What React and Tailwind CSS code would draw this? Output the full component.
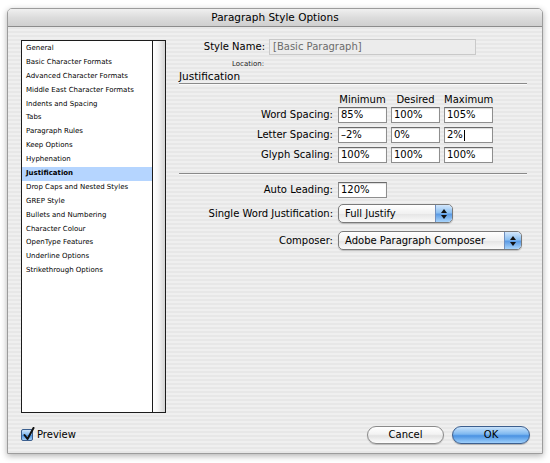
import React from "react";

const font = "font-['DejaVu_Sans',sans-serif]";

const sections = [
  "General",
  "Basic Character Formats",
  "Advanced Character Formats",
  "Middle East Character Formats",
  "Indents and Spacing",
  "Tabs",
  "Paragraph Rules",
  "Keep Options",
  "Hyphenation",
  "Justification",
  "Drop Caps and Nested Styles",
  "GREP Style",
  "Bullets and Numbering",
  "Character Colour",
  "OpenType Features",
  "Underline Options",
  "Strikethrough Options",
];

const spacingRows = [
  { label: "Word Spacing:", values: ["85%", "100%", "105%"] },
  { label: "Letter Spacing:", values: ["\u20132%", "0%", "2%"] },
  { label: "Glyph Scaling:", values: ["100%", "100%", "100%"] },
];

const Field = ({ value, caret = false, className = "w-[49px]" }) => (
  <div
    className={`${className} h-[16px] bg-white border border-[#8e8e8e] border-t-[#6a6a6a] shadow-[inset_0_1px_1px_rgba(0,0,0,0.15)] pl-[2px] flex items-center text-[10px] leading-none text-black`}
  >
    {value}
    {caret && <span className="w-px h-[11px] bg-black ml-px" />}
  </div>
);

const PopupArrows = () => (
  <div className="w-[17px] h-full rounded-r-[4px] border-l border-[#6f8fbf] bg-[linear-gradient(180deg,#d3e7fc_0%,#8cc0f2_45%,#5c9be4_55%,#a8d4fb_100%)] flex flex-col items-center justify-center gap-[2px]">
    <svg width="6" height="4" viewBox="0 0 6 4">
      <path d="M3 0 L6 4 L0 4 Z" fill="#111" />
    </svg>
    <svg width="6" height="4" viewBox="0 0 6 4">
      <path d="M0 0 L6 0 L3 4 Z" fill="#111" />
    </svg>
  </div>
);

const Popup = ({ value, className }) => (
  <div
    className={`${className} h-[19px] rounded-[5px] border border-[#7a7a7a] bg-[linear-gradient(180deg,#ffffff_0%,#f1f1f1_50%,#e4e4e4_51%,#fafafa_100%)] shadow-[0_1px_1px_rgba(0,0,0,0.2)] flex items-center justify-between overflow-hidden`}
  >
    <span className="pl-[6px] text-[10px] leading-none text-black">{value}</span>
    <PopupArrows />
  </div>
);

const App = () => {
  return (
    <div className={`w-[550px] h-[463px] bg-white pt-[8px] pl-[7px] ${font}`}>
      <div className="w-[536px] h-[446px] flex flex-col rounded-t-[5px] border border-[#9c9c9c] shadow-[0_2px_6px_rgba(0,0,0,0.3)] bg-[repeating-linear-gradient(180deg,#efefef_0px,#efefef_2px,#e7e7e7_2px,#e7e7e7_4px)] overflow-hidden">
        {/* title bar */}
        <div className="h-[18px] shrink-0 flex items-center justify-center border-b border-[#8c8c8c] bg-[linear-gradient(180deg,#f0f0f0_0%,#dcdcdc_50%,#cfcfcf_100%)] text-[10.5px] text-black">
          Paragraph Style Options
        </div>

        <div className="flex-1 flex flex-col pl-[13px] pr-[12px] pt-[12px]">
          <div className="flex items-start h-[374px]">
            {/* section list */}
            <div className="mt-[1px] w-[145px] h-[373px] flex border border-[#1c1c1c] bg-white">
              <div className="flex-1 pt-[1px]">
                {sections.map((s) => (
                  <div
                    key={s}
                    className={`h-[13.9px] leading-[13.9px] pl-[4px] text-[7px] text-black whitespace-nowrap ${
                      s === "Justification" ? "bg-[#b5d5ff] font-bold" : ""
                    }`}
                  >
                    {s}
                  </div>
                ))}
              </div>
              <div className="w-[13px] border-l border-[#1c1c1c] bg-[linear-gradient(90deg,#ffffff_0%,#f6f6f6_40%,#d4d4d4_100%)]" />
            </div>

            {/* right pane */}
            <div className="ml-[13px] w-[348px] flex flex-col text-[10px] text-black">
              <div className="flex items-center">
                <div className="w-[86px] text-right leading-none">Style Name:</div>
                <div className="ml-[4px] w-[207px] h-[16px] border border-[#c9c9c9] bg-[#ececec] flex items-center pl-[3px] text-[#6b6b6b] leading-none">
                  [Basic Paragraph]
                </div>
              </div>
              <div className="mt-[5px] w-[85px] text-right text-[7px] leading-[9px] text-[#222]">Location:</div>
              <div className="leading-[14px] text-[10.5px] border-b border-[#8a8a8a] shadow-[0_1px_0_#fafafa]">
                Justification
              </div>

              <div className="mt-[10px] flex leading-[12px]">
                <div className="w-[159px]" />
                <div className="flex gap-[4px]">
                  <div className="w-[49px] text-center">Minimum</div>
                  <div className="w-[49px] text-center">Desired</div>
                  <div className="w-[49px] text-center">Maximum</div>
                </div>
              </div>

              <div className="mt-[1px] flex flex-col gap-[4px]">
                {spacingRows.map((r, i) => (
                  <div key={r.label} className="flex items-center">
                    <div className="w-[154px] text-right leading-none">{r.label}</div>
                    <div className="ml-[5px] flex gap-[4px]">
                      {r.values.map((v, j) => (
                        <Field key={j} value={v} caret={i === 1 && j === 2} />
                      ))}
                    </div>
                  </div>
                ))}
              </div>

              <div className="mt-[10px] border-t border-[#8a8a8a] shadow-[0_1px_0_#fafafa]" />

              <div className="mt-[8px] flex items-center">
                <div className="w-[154px] text-right leading-none">Auto Leading:</div>
                <div className="ml-[5px]">
                  <Field value="120%" />
                </div>
              </div>

              <div className="mt-[6px] flex items-center">
                <div className="w-[154px] text-right leading-none">Single Word Justification:</div>
                <div className="ml-[5px]">
                  <Popup value="Full Justify" className="w-[115px]" />
                </div>
              </div>

              <div className="mt-[8px] flex items-center">
                <div className="w-[154px] text-right leading-none">Composer:</div>
                <div className="ml-[5px]">
                  <Popup value="Adobe Paragraph Composer" className="w-[184px]" />
                </div>
              </div>
            </div>
          </div>

          {/* footer */}
          <div className="mt-[13px] flex items-center justify-between">
            <div className="flex items-center pl-[0px]">
              <div className="relative w-[12px] h-[12px] rounded-[2px] border border-[#3b5f8f] bg-[linear-gradient(180deg,#cfe5fb_0%,#7db6ef_50%,#4d93e0_55%,#a4d0fa_100%)]">
                <svg
                  className="absolute left-[1px] top-[-3px]"
                  width="12"
                  height="14"
                  viewBox="0 0 12 14"
                >
                  <path d="M1.5 8 L4.5 12 L10.5 1" fill="none" stroke="#111" strokeWidth="2" strokeLinecap="round" strokeLinejoin="round" />
                </svg>
              </div>
              <span className="ml-[4px] text-[10px] leading-none text-black">Preview</span>
            </div>
            <div className="flex items-center gap-[8px]">
              <button className="w-[77px] h-[18px] rounded-full border border-[#8a8a8a] bg-[linear-gradient(180deg,#ffffff_0%,#f3f3f3_45%,#e2e2e2_55%,#fdfdfd_100%)] shadow-[0_1px_1px_rgba(0,0,0,0.2)] text-[10px] leading-none text-black">
                Cancel
              </button>
              <button className="w-[78px] h-[18px] rounded-full border border-[#3d5f8e] bg-[linear-gradient(180deg,#c8e2fb_0%,#7eb8f0_45%,#4a92e2_55%,#9fd0fb_100%)] shadow-[0_1px_1px_rgba(0,0,0,0.25)] text-[10px] leading-none text-black">
                OK
              </button>
            </div>
          </div>
        </div>
      </div>
    </div>
  );
};

export default App;
